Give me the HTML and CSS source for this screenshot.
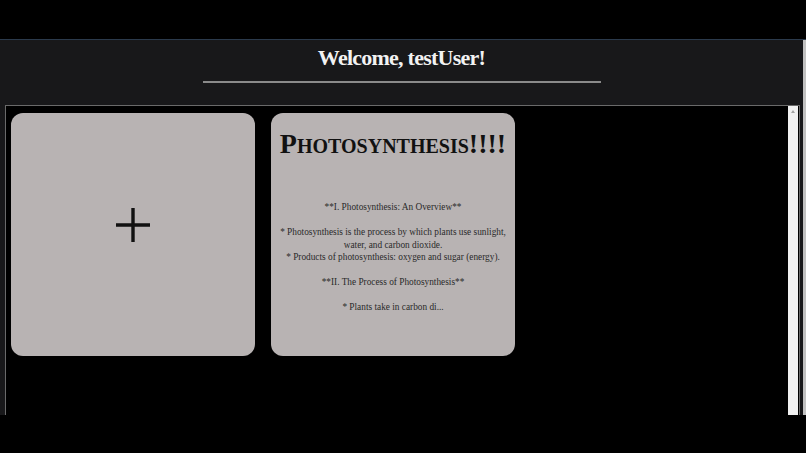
FILE: index.html
```html
<!DOCTYPE html>
<html>
<head>
<meta charset="utf-8">
<link rel="stylesheet" href="styles.css">
</head>
<body>
<div class="topbar"></div>
<div class="window">
  <div class="page">
    <h1 class="welcome">Welcome, testUser!</h1>
    <div class="rule"></div>
    <div class="board">
      <div class="cards">
        <div class="card add">
          <svg class="plus" width="36" height="36" viewBox="0 0 36 36"><path d="M18 1 V35 M1 18 H35" stroke="#111" stroke-width="3.4" fill="none"/></svg>
        </div>
        <div class="card note">
          <div class="note-title">Photosynthesis!!!!</div>
          <div class="note-body">
            <p>**I. Photosynthesis: An Overview**</p>
            <p>* Photosynthesis is the process by which plants use sunlight, water, and carbon dioxide.<br>* Products of photosynthesis: oxygen and sugar (energy).</p>
            <p>**II. The Process of Photosynthesis**</p>
            <p>* Plants take in carbon di...</p>
          </div>
        </div>
      </div>
      <div class="inner-scroll"><span class="arrow"></span></div>
    </div>
  </div>
  <div class="page-scroll"></div>
</div>
<div class="bottombar"></div>
</body>
</html>
```
FILE: styles.css
```css
html, body {
  margin: 0;
  padding: 0;
  background: #000;
  width: 806px;
  height: 453px;
  overflow: hidden;
}
.topbar {
  height: 39px;
  background: #000;
}
.window {
  height: 375px;
  display: flex;
  border-top: 1px solid #2b3a4c;
  background: #18181a;
}
.page {
  flex: 1;
  display: flex;
  flex-direction: column;
  align-items: center;
  overflow: hidden;
}
.welcome {
  margin: 5px 0 0 0;
  height: 26px;
  font-family: "Liberation Serif", serif;
  font-weight: bold;
  font-size: 22px;
  line-height: 26px;
  color: #f2f2f2;
  letter-spacing: -0.75px;
}
.rule {
  margin-top: 10px;
  width: 398px;
  height: 2px;
  background: #8a8a8a;
}
.board {
  align-self: flex-start;
  margin: 22px 0 0 5px;
  width: 793px;
  flex: 1;
  display: flex;
  border: 1px solid #6a6a6a;
  border-bottom: none;
  background: #000;
}
.cards {
  flex: 1;
  display: flex;
  align-items: flex-start;
  gap: 16px;
  padding: 7px 5px;
}
.card {
  width: 244px;
  height: 243px;
  border-radius: 12px;
  background: #b8b3b3;
  box-sizing: border-box;
}
.add {
  display: flex;
  align-items: center;
  justify-content: center;
}
.plus {
  margin-top: -19px;
  margin-left: 0;
}
.note {
  padding: 15px 6px 0;
  text-align: center;
}
.note-title {
  font-family: "Liberation Serif", serif;
  font-variant: small-caps;
  font-weight: bold;
  font-size: 28px;
  line-height: 32px;
  color: #111;
  letter-spacing: 0px;
}
.note-body {
  margin-top: 41px;
  font-family: "Liberation Serif", serif;
  font-size: 9.3px;
  line-height: 12.5px;
  color: #2a2a2a;
}
.note-body p {
  margin: 0 0 12.5px 0;
}
.inner-scroll {
  width: 10px;
  margin-right: 1px;
  background: #f1f1f1;
  position: relative;
}
.arrow {
  position: absolute;
  top: 4px;
  left: 3px;
  width: 0;
  height: 0;
  border-left: 2px solid transparent;
  border-right: 2px solid transparent;
  border-bottom: 3px solid #a3a3a3;
}
.page-scroll {
  width: 3px;
  background: #c1c1c1;
}
.bottombar {
  height: 38px;
  background: #000;
}
```
